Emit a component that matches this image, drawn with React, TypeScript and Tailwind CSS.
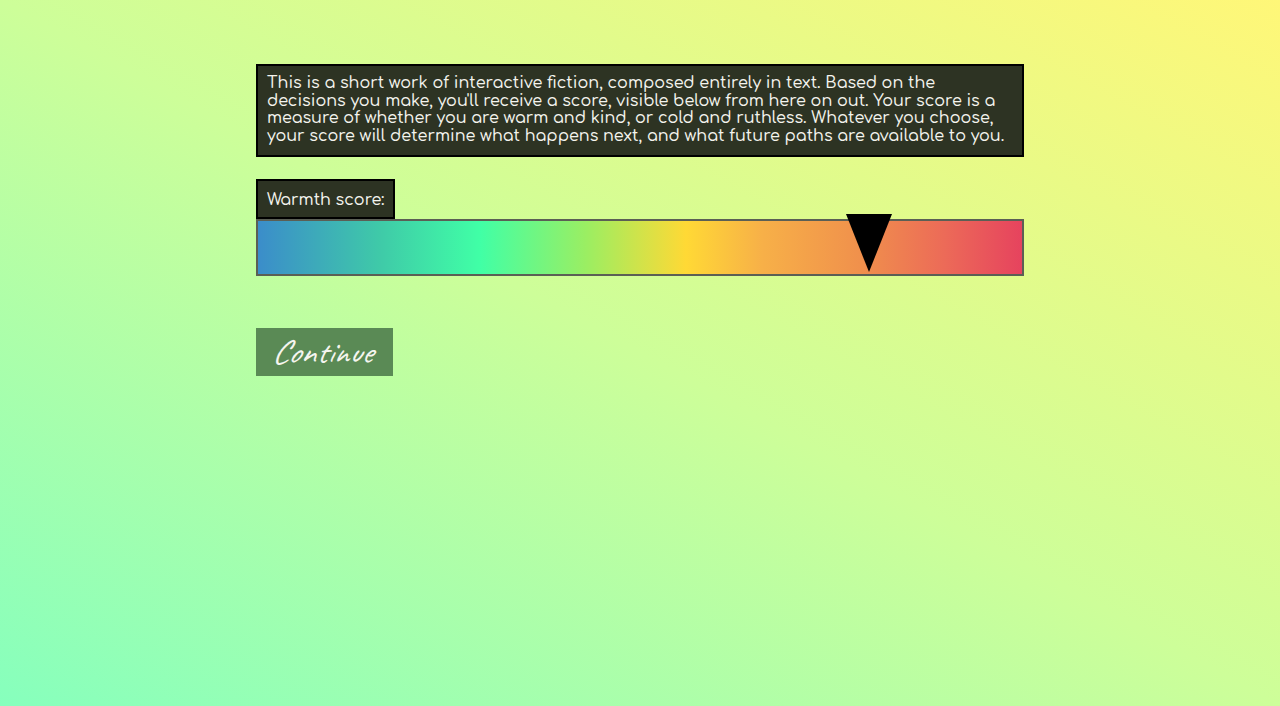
import React from 'react'

const score = 0.8

export default function App() {
  return (
    <div
      className="min-h-[706px] w-full bg-[linear-gradient(to_top_right,#86ffbd_0%,#cdfe99_50%,#fff778_100%)]"
      style={{ fontFamily: '"Comfortaa", "Noto Sans", "Liberation Sans", sans-serif' }}
    >
      <div className="mx-auto w-[768px] pt-16">
        <div className="border-2 border-black bg-[#2d3323] px-[9px] pt-[9px] pb-[9px] text-[16px] font-medium leading-[17.7px] text-[#f4f4ee]">
          This is a short work of interactive fiction, composed entirely in text. Based on the decisions you make,
          you'll receive a score, visible below from here on out. Your score is a measure of whether you are warm and
          kind, or cold and ruthless. Whatever you choose, your score will determine what happens next, and what future
          paths are available to you.
        </div>

        <div className="mt-[22px]">
          <div className="inline-flex h-10 items-center whitespace-nowrap border-2 border-black bg-[#2d3323] px-[9px] pt-[2px] text-[16px] font-medium text-[#f4f4ee]">
            Warmth score:
          </div>
          <div className="relative h-[57px] border-2 border-[#5b5f55] bg-[linear-gradient(to_right,#3b8dca_0%,#3fcaa8_16%,#40ffa6_29%,#9bee62_43%,#ffd935_56%,#f7b048_66%,#f0904c_79%,#ec6a58_90%,#e6435e_100%)]">
            <svg
              className="absolute top-[-7px] -translate-x-1/2"
              style={{ left: `${score * 100}%` }}
              width="46"
              height="58"
              viewBox="0 0 46 58"
            >
              <polygon points="0,0 46,0 23,58" fill="#000" />
            </svg>
          </div>
        </div>

        <button
          className="mt-[52px] flex h-12 w-[137px] items-center justify-center bg-[#5a8a55] pr-[6px] text-[34px] italic leading-none text-[#f5f5ef]"
          style={{ fontFamily: '"Caveat", "Comic Sans MS", "DejaVu Sans", sans-serif' }}
        >
          Continue
        </button>
      </div>
    </div>
  )
}
